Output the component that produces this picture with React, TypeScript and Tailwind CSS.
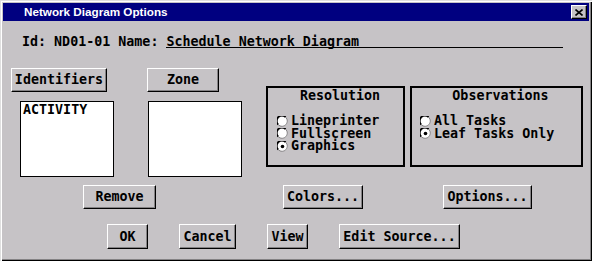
import type { ReactNode } from 'react';

const mono = "font-['DejaVu_Sans_Mono',monospace] font-bold text-[13.33px] text-black";

function Btn({ className, children }: { className: string; children: ReactNode }) {
  return (
    <div
      className={`flex items-center justify-center bg-[#c6c3c6] border-t border-l border-t-white border-l-white border-b border-r border-b-black border-r-black shadow-[inset_-1px_-1px_0_#848284] leading-none whitespace-pre ${className}`}
    >
      {children}
    </div>
  );
}

function Radio({ checked }: { checked?: boolean }) {
  return (
    <svg width="11" height="11" viewBox="0 0 11 11" className="shrink-0">
      <circle cx="5.5" cy="5.5" r="5" fill="#fff" />
      <path d="M1.2 8.6 A5 5 0 0 1 8.6 1.2" stroke="#000" strokeWidth="1.8" fill="none" />
      <path d="M8.8 1.4 A5 5 0 0 1 1.4 8.8" stroke="#848284" strokeWidth="1" fill="none" />
      {checked && <circle cx="5.5" cy="5.5" r="1.8" fill="#000" />}
    </svg>
  );
}

function Group({ title, items, className }: { title: string; items: { label: string; checked?: boolean }[]; className: string }) {
  return (
    <div className={`border-2 border-black flex flex-col ${className}`}>
      <div className="text-center leading-[16px]">{title}</div>
      <div className="mt-[11px] flex flex-col">
        {items.map(item => (
          <div key={item.label} className="flex items-center h-[12.5px] leading-[12.5px]">
            <Radio checked={item.checked} />
            <span className="ml-[3px] whitespace-pre">{item.label}</span>
          </div>
        ))}
      </div>
    </div>
  );
}

export default function App() {
  return (
    <div
      className={`w-[592px] h-[261px] bg-[#c6c3c6] p-[3px] flex flex-col shadow-[inset_1px_1px_0_#dfdfdf,inset_2px_2px_0_#fff,inset_-1px_-1px_0_#000,inset_-2px_-2px_0_#848284] ${mono}`}
    >
      {/* title bar */}
      <div className="h-[18px] bg-[#000080] flex items-center justify-between shrink-0">
        <span className="pl-[21px] text-white font-['Liberation_Sans',sans-serif] font-bold text-[11.7px] leading-none">
          Network Diagram Options
        </span>
        <div className="mr-[2px] w-[16px] h-[14px] bg-[#c6c3c6] border-t border-l border-t-white border-l-white border-b border-r border-b-black border-r-black shadow-[inset_-1px_-1px_0_#848284] flex items-center justify-center">
          <svg width="8" height="7" viewBox="0 0 8 7">
            <path d="M0.5 0.5 L7.5 6.5 M7.5 0.5 L0.5 6.5" stroke="#000" strokeWidth="1.6" />
          </svg>
        </div>
      </div>

      {/* id line */}
      <div className="mt-[13px] ml-[19px] flex h-[16px] leading-[16px] whitespace-pre">
        <span>Id: ND01-01 Name: </span>
        <span className="w-[397px] h-[14px] border-b border-black">Schedule Network Diagram</span>
      </div>

      {/* identifiers / zone / groups */}
      <div className="mt-[18px] flex items-start">
        <div className="ml-[8px] flex flex-col">
          <Btn className="w-[96px] h-[24px]">Identifiers</Btn>
          <div className="mt-[9px] ml-[9px] w-[94px] h-[76px] bg-white border border-black px-[2px] pt-[1px] leading-[14px]">
            ACTIVITY
          </div>
        </div>
        <div className="ml-[33px] flex flex-col">
          <Btn className="w-[72px] h-[24px]">Zone</Btn>
          <div className="mt-[9px] ml-[1px] w-[94px] h-[76px] bg-white border border-black" />
        </div>
        <Group
          className="ml-[24px] mt-[18px] w-[139px] h-[81px] pl-[9px]"
          title="Resolution"
          items={[{ label: 'Lineprinter' }, { label: 'Fullscreen' }, { label: 'Graphics', checked: true }]}
        />
        <Group
          className="ml-[5px] mt-[18px] w-[173px] h-[81px] pl-[8px]"
          title="Observations"
          items={[{ label: 'All Tasks' }, { label: 'Leaf Tasks Only', checked: true }]}
        />
      </div>

      {/* action row */}
      <div className="mt-[8px] flex">
        <Btn className="ml-[80px] w-[73px] h-[24px]">Remove</Btn>
        <Btn className="ml-[127px] w-[80px] h-[24px]">Colors...</Btn>
        <Btn className="ml-[80px] w-[89px] h-[24px]">Options...</Btn>
      </div>

      {/* dialog buttons */}
      <div className="mt-[15px] flex">
        <Btn className="ml-[104px] w-[41px] h-[25px]">OK</Btn>
        <Btn className="ml-[31px] w-[57px] h-[25px]">Cancel</Btn>
        <Btn className="ml-[31px] w-[41px] h-[25px]">View</Btn>
        <Btn className="ml-[31px] w-[121px] h-[25px]">Edit Source...</Btn>
      </div>
    </div>
  );
}
